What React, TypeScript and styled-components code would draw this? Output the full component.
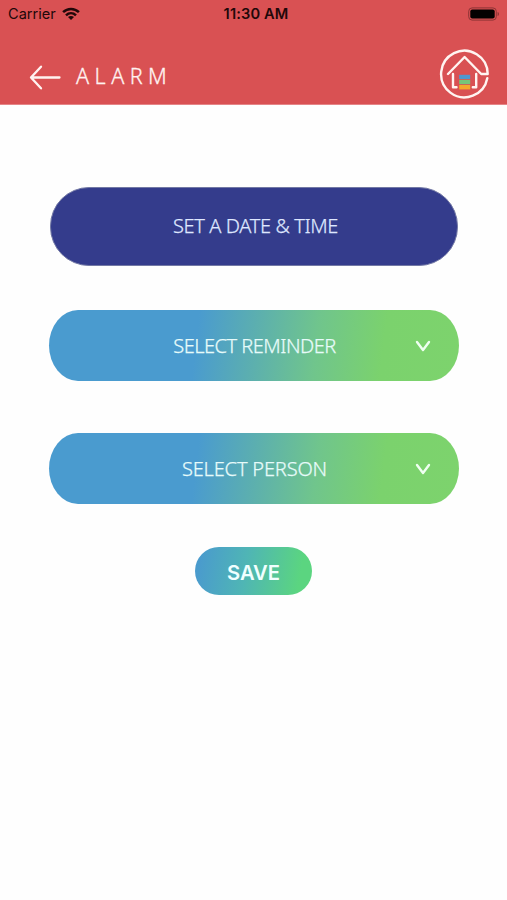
import React from "react";
import styled, { createGlobalStyle } from "styled-components";

const GlobalStyle = createGlobalStyle`
  *, *::before, *::after { box-sizing: border-box; }
  body { margin: 0; background: #fefefe; }
  button { border: 0; padding: 0; background: none; color: inherit; font: inherit; }
  svg { display: block; }
`;

const Screen = styled.div`
  width: 507px;
  height: 900px;
  overflow: hidden;
  background: #fefefe;
  font-family: "Noto Sans", sans-serif;
`;

const TopBar = styled.header`
  height: 105px;
  background: #d95153;
  border-bottom: 1px solid #e58587;
`;

const StatusBar = styled.div`
  height: 28px;
  padding: 0 7px 0 8px;
  display: grid;
  grid-template-columns: 1fr auto 1fr;
  align-items: center;
  color: #210809;
  font-family: Inter, sans-serif;
  font-size: 14.6px;
  line-height: 28px;
`;

const Carrier = styled.div`
  display: flex;
  align-items: center;
  gap: 6px;
`;

const Clock = styled.span`
  font-weight: 600;
  font-size: 14.6px;
  letter-spacing: 0.15px;
  margin-left: 4px;
`;

const Battery = styled.div`
  justify-self: end;
`;

const NavRow = styled.div`
  height: 76px;
  padding: 17px 17px 0 29px;
  display: flex;
  align-items: flex-start;
  color: #fff3f1;
`;

const BackButton = styled.button`
  margin-top: 20px;
`;

const Title = styled.h1`
  margin: 17px auto 0 14px;
  font-size: 21.5px;
  line-height: 28px;
  font-weight: 300;
  letter-spacing: 5.5px;
  -webkit-text-stroke: 0.3px currentColor;
`;

const Logo = styled.div`
  margin-top: 2.5px;
`;

const Form = styled.main`
  padding: 82px 48px 0 49px;
  display: flex;
  flex-direction: column;
  align-items: center;
`;

const DateButton = styled.button`
  width: 408px;
  height: 79px;
  padding: 0 0 1px 2px;
  border-radius: 39px;
  border: 1px solid #7379a5;
  background: #343c8c;
  color: #dfe7ff;
`;

const SelectButton = styled.button<{ $gap: number }>`
  width: 410px;
  height: 71px;
  margin-top: ${(p) => p.$gap}px;
  padding: 1px 28px 0;
  border-radius: 29px / 35.5px;
  background: linear-gradient(97deg, #4a9bcf 0%, #4a9bcf 36%, #5cafaf 50%, #70c58c 65%, #7bd26d 81%, #7dd36d 100%);
  color: #e7fbfa;
  display: grid;
  grid-template-columns: 16px 1fr 16px;
  align-items: center;
`;

const Label = styled.span<{ $spacing: number }>`
  grid-column: 2;
  padding-left: 1px;
  font-size: 20px;
  line-height: 28px;
  font-weight: 300;
  white-space: nowrap;
  letter-spacing: ${(p) => p.$spacing}px;
  -webkit-text-stroke: 0.25px currentColor;
`;

const SaveButton = styled.button`
  width: 117px;
  height: 48px;
  margin: 43px 2px 0 0;
  padding: 3px 0 0 1px;
  border-radius: 24px;
  background: linear-gradient(100deg, #4a9bcd 5%, #4fb5b5 43%, #5bd580 88%);
  color: #f1ffff;
  font-family: Inter, sans-serif;
  font-size: 20.2px;
  font-weight: 600;
`;

const ArrowIcon = () => (
  <svg width="33" height="26" viewBox="0 0 33 26" fill="none" stroke="currentColor" strokeWidth="2.3" strokeLinecap="round" strokeLinejoin="round">
    <path d="M30.5 12.5H2M12 1.7L2 12.5L12 23.3" />
  </svg>
);

const ChevronIcon = () => (
  <svg width="16" height="14" viewBox="0 0 16 14" fill="none" stroke="#effff1" strokeWidth="2.4" strokeLinecap="round" strokeLinejoin="round">
    <path d="M2 3L8 11L14 3" />
  </svg>
);

const WifiIcon = () => (
  <svg width="18" height="14" viewBox="0 0 18 14" fill="none" stroke="#210809" strokeWidth="2.5">
    <path d="M1.1 5.2C5.6 .8 12.4 .8 16.9 5.2" />
    <path d="M4 8.3C6.9 5.5 11.1 5.5 14 8.3" />
    <path d="M9 13L6 10C7.7 8.5 10.3 8.5 12 10Z" fill="#210809" stroke="none" />
  </svg>
);

const BatteryIcon = () => (
  <svg width="32" height="14" viewBox="0 0 32 14">
    <rect x=".7" y=".9" width="27.6" height="12.2" rx="3.4" fill="none" stroke="#8d3435" strokeWidth="1" />
    <rect x="2.3" y="2.4" width="24.4" height="9.2" rx="2" fill="#050101" />
    <path d="M29.6 5C31.4 5.5 31.4 8.5 29.6 9Z" fill="#8d3435" />
  </svg>
);

const HouseLogo = () => (
  <svg width="51" height="51" viewBox="0 0 51 51" fill="none" stroke="#fff4f1" strokeWidth="2.4" strokeLinecap="round" strokeLinejoin="round">
    <path d="M9 26L25.6 9L42.2 26H48.7A23.3 23.3 0 1 0 48.3 30.3" />
    <path d="M14 26V39.3H17.5M37.2 26V39.3H33.8" />
    <g stroke="none">
      <rect x="20.2" y="26.8" width="11" height="4.2" fill="#4e97d0" />
      <rect x="20.2" y="31.8" width="11" height="4.4" fill="#76c578" />
      <rect x="20.2" y="37" width="11" height="4.4" fill="#f4a72c" />
    </g>
  </svg>
);

const Select = ({ label, gap, spacing }: { label: string; gap: number; spacing: number }) => (
  <SelectButton type="button" $gap={gap}>
    <Label $spacing={spacing}>{label}</Label>
    <ChevronIcon />
  </SelectButton>
);

export default function App() {
  return (
    <Screen>
      <GlobalStyle />
      <TopBar>
        <StatusBar>
          <Carrier>Carrier <WifiIcon /></Carrier>
          <Clock>11:30 AM</Clock>
          <Battery><BatteryIcon /></Battery>
        </StatusBar>
        <NavRow>
          <BackButton type="button" aria-label="Back"><ArrowIcon /></BackButton>
          <Title>ALARM</Title>
          <Logo><HouseLogo /></Logo>
        </NavRow>
      </TopBar>
      <Form>
        <DateButton type="button"><Label $spacing={-0.38}>SET A DATE &amp; TIME</Label></DateButton>
        <Select label="SELECT REMINDER" gap={44} spacing={-0.52} />
        <Select label="SELECT PERSON" gap={52} spacing={-0.18} />
        <SaveButton type="button">SAVE</SaveButton>
      </Form>
    </Screen>
  );
}
